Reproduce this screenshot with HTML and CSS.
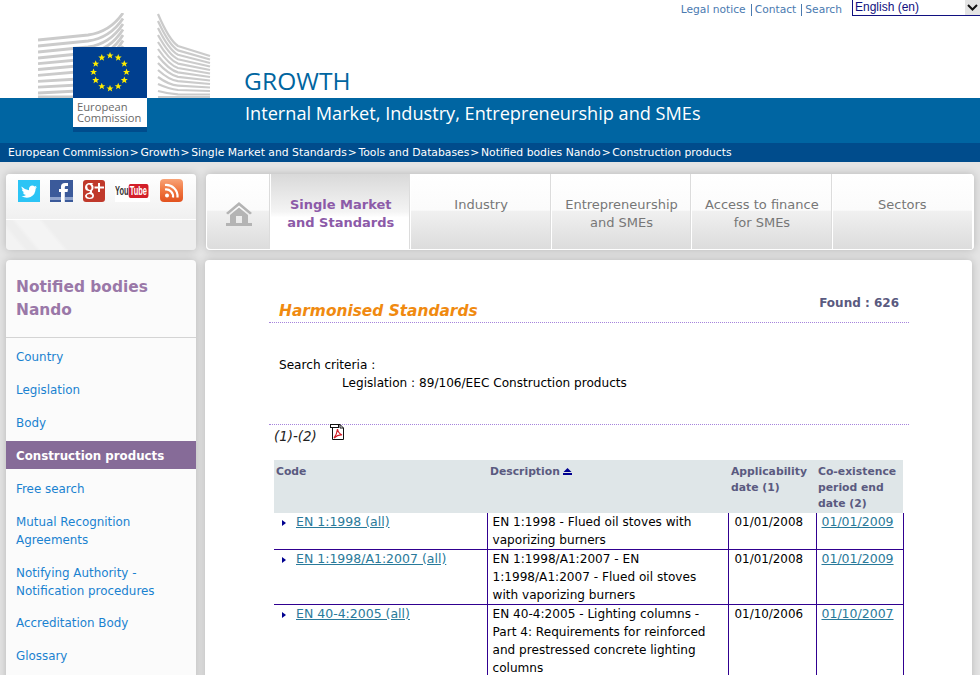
FILE: index.html
```html
<!DOCTYPE html>
<html lang="en">
<head>
<meta charset="utf-8">
<title>Harmonised Standards</title>
<link rel="stylesheet" href="styles.css">
</head>
<body>
<svg class="defs" width="0" height="0"><defs><polygon id="star" points="0,-3.6 1,-1.1 3.5,-1.1 1.5,.5 2.2,3 0,1.5 -2.2,3 -1.5,.5 -3.5,-1.1 -1,-1.1" fill="#ffed00"/></defs></svg>
<header class="top">
  <div class="logo">
    <svg class="building" width="180" height="85" viewBox="0 0 180 85" fill="none">
      <g stroke="#cbcbcb" stroke-width="2.8">
        <path d="M0 27 L50 22 Q72 19 85 0"/><path d="M0 33 L50 28 Q72 25 85 5.5"/><path d="M0 39 L50 34 Q72 31 85 11"/><path d="M0 45 L50 40 Q72 37 85 16.5"/><path d="M0 50.6 L50 46 Q72 43 85 22"/><path d="M0 56.5 L50 52 Q72 49 85 27.5"/><path d="M0 62.4 L50 58 Q72 55 85 33"/><path d="M0 68.3 L40 66"/><path d="M0 74.2 L40 72"/><path d="M0 80 L40 78"/><path d="M0 84 L40 84"/>
      </g>
      <g stroke="#cbcbcb" stroke-width="2.2">
        <path d="M120 1 Q131 27 140 33 L172 43"/><path d="M120 8 Q131 32 140 37.4 L172 46.5"/><path d="M120 15 Q131 37 140 41.8 L172 50"/><path d="M120 22 Q131 42 140 46.2 L172 53.5"/><path d="M120 29 Q131 47 140 50.6 L172 57"/><path d="M120 36 Q131 52 140 55 L172 60.5"/><path d="M120 43 Q131 57 140 59.4 L172 64"/><path d="M120 50 Q131 62 140 63.8 L172 67.5"/><path d="M120 57 Q131 67 140 68.2 L172 71"/><path d="M120 64 Q131 72 140 72.6 L172 74.5"/><path d="M120 71 Q131 76 140 77 L172 78"/><path d="M120 78 Q131 81 140 81.4 L172 81.5"/><path d="M120 84 L172 84"/>
      </g>
    </svg>
    <svg class="flag" width="74" height="51" viewBox="0 0 74 51">
      <rect width="74" height="51" fill="#003f8f"/>
      <g transform="translate(37 25)">
        <use href="#star" x="0" y="-16.5"/><use href="#star" x="8.2" y="-14.3"/><use href="#star" x="14.3" y="-8.2"/><use href="#star" x="16.5" y="0"/><use href="#star" x="14.3" y="8.2"/><use href="#star" x="8.2" y="14.3"/><use href="#star" x="0" y="16.5"/><use href="#star" x="-8.2" y="14.3"/><use href="#star" x="-14.3" y="8.2"/><use href="#star" x="-16.5" y="0"/><use href="#star" x="-14.3" y="-8.2"/><use href="#star" x="-8.2" y="-14.3"/>
      </g>
    </svg>
    <div class="logo-text">European<br>Commission</div>
  </div>
  <div class="tools">
    <a href="#">Legal notice</a><span class="pipe"></span><a href="#">Contact</a><span class="pipe"></span><a href="#">Search</a>
    <div class="lang"><span>English (en)</span><i class="lang-btn"><svg width="11" height="7" viewBox="0 0 11 7"><path d="M1 1 L5.5 5.5 L10 1" fill="none" stroke="#111" stroke-width="2"/></svg></i></div>
  </div>
  <div class="title">GROWTH</div>
  <div class="band">Internal Market, Industry, Entrepreneurship and SMEs</div>
  <nav class="crumbs">
    <a href="#">European Commission</a><b>&gt;</b><a href="#">Growth</a><b>&gt;</b><a href="#">Single Market and Standards</a><b>&gt;</b><a href="#">Tools and Databases</a><b>&gt;</b><a href="#">Notified bodies Nando</a><b>&gt;</b><a href="#">Construction products</a>
  </nav>
</header>

<div class="row">
  <div class="social">
    <div class="social-icons">
      <svg width="22" height="22" viewBox="0 0 22 22"><rect width="22" height="22" fill="#2cc4f5"/><path d="M3.5 6.5 Q7 10 11 10.2 Q10.6 6 14 5.5 Q15.6 5.4 16.5 6.5 L18.6 5.8 L17.4 7.6 L19 7.2 L17.6 8.8 Q17.6 14.5 12.5 17 Q8 18.6 3.5 16.3 Q6.3 16.3 8 15 Q5.5 14.8 4.8 12.6 L6.4 12.5 Q3.9 11.7 3.8 9.3 L5.4 9.7 Q3 8.5 3.5 6.5Z" fill="#fff"/></svg>
      <svg width="23" height="22" viewBox="0 0 23 22"><rect width="23" height="22" fill="#3b5a9a"/><path d="M11 22 V12 H9 V9 H11 V6.5 Q11 3 15 3 H18 V6 H16 Q14.8 6 14.8 7.2 V9 H18 L17.5 12 H14.8 V22Z" fill="#fff"/><rect x="0" y="17" width="11" height="3" fill="#8fa3cc"/><rect x="15" y="17" width="8" height="3" fill="#8fa3cc"/></svg>
      <svg width="22" height="22" viewBox="0 0 22 22"><rect width="22" height="22" rx="3" fill="#c0392b"/><path d="M10.5 3 H5.5 Q2 4 2 7.5 Q2 10.5 5.5 11 H7 L6.5 12.5 Q3 12.8 2 15.5 Q2 19 6.5 19 Q11 19 11 15.5 Q11 13.5 9 12.5 L9 11 Q11 9.5 10.5 6.5 Q10 4.5 9 4Z M6 4.5 Q8.5 5 8.5 8 Q8.5 10 6.8 10 Q4.3 9.5 4.2 6.5 Q4.3 4.7 6 4.5Z M6.5 14 Q9.5 14.5 9.3 16 Q9 17.7 6.5 17.7 Q3.8 17.5 3.8 15.8 Q4 14 6.5 14Z" fill="#fff"/><path d="M15 3 H17 V6.5 H21 V8.5 H17 V12 H15 V8.5 H11.5 V6.5 H15Z" fill="#fff"/></svg>
      <div class="yt"><span class="yt-in"><span class="yt-you">You</span><span class="yt-tube">Tube</span></span></div>
      <svg class="rss" width="23" height="23" viewBox="0 0 23 23"><defs><linearGradient id="rss" x1="0" y1="0" x2="0" y2="1"><stop offset="0" stop-color="#f8a377"/><stop offset=".5" stop-color="#f0763f"/><stop offset="1" stop-color="#e2521f"/></linearGradient></defs><rect width="23" height="23" rx="4" fill="url(#rss)"/><circle cx="7" cy="16.5" r="2" fill="#fff"/><path d="M5 10.5 A7 7 0 0 1 13 18.5 M5 6 A11.5 11.5 0 0 1 17.5 18.5" fill="none" stroke="#fff" stroke-width="2.2"/></svg>
    </div>
  </div>
  <nav class="tabs">
    <a class="tab-home" href="#"><svg width="28" height="25" viewBox="0 0 28 25"><path d="M1 12 L14 1 L27 12 L25 13.5 L14 4.5 L3 13.5Z M5 14 L14 6.5 L23 14 V22 H17 V15 H11 V22 H5Z M1 22 H27 V25 H1Z" fill="#b4b4b4"/></svg></a>
    <a class="tab tab-active" href="#">Single Market<br>and Standards</a>
    <a class="tab" href="#">Industry</a>
    <a class="tab" href="#">Entrepreneurship<br>and SMEs</a>
    <a class="tab" href="#">Access to finance<br>for SMEs</a>
    <a class="tab tab-last" href="#">Sectors</a>
  </nav>
</div>

<div class="row row-main">
  <aside class="side">
    <h2 class="side-title">Notified bodies Nando</h2>
    <ul class="side-menu">
      <li><a href="#">Country</a></li>
      <li><a href="#">Legislation</a></li>
      <li><a href="#">Body</a></li>
      <li class="on"><a href="#">Construction products</a></li>
      <li><a href="#">Free search</a></li>
      <li class="wide-gap"><a href="#">Mutual Recognition Agreements</a></li>
      <li class="tight-gap"><a href="#">Notifying Authority - Notification procedures</a></li>
      <li><a href="#">Accreditation Body</a></li>
      <li><a href="#">Glossary</a></li>
    </ul>
  </aside>
  <main class="content">
    <div class="head-row">
      <h1 class="page-title">Harmonised Standards</h1>
      <div class="found">Found : 626</div>
    </div>
    <div class="criteria">
      <p>Search criteria :</p>
      <p class="crit-val">Legislation : 89/106/EEC Construction products</p>
    </div>
    <div class="pager">
      <em>(1)-(2)</em>
      <svg class="pdf" width="15" height="18" viewBox="0 0 15 18"><path d="M2.5 1.5 H10 L13.5 5 V16.5 H2.5Z" fill="#fff" stroke="#111"/><path d="M10 1.5 V5 H13.5" fill="none" stroke="#111"/><rect x="0.5" y="1.5" width="8" height="3" fill="#fff" stroke="#111"/><path d="M4 15 Q7 11 7.5 6 Q8 10 12 12 Q8 11.5 4 15Z" fill="none" stroke="#d3202a" stroke-width="1.2"/></svg>
    </div>
    <table class="grid">
      <colgroup><col class="c1"><col class="c2"><col class="c3"><col class="c4"></colgroup>
      <thead>
        <tr><th class="th-code">Code</th><th>Description <svg class="sort" width="9" height="7" viewBox="0 0 9 7"><path d="M4.5 0 L8.5 4 H.5Z M0 5 H9 V7 H0Z" fill="#000090"/></svg></th><th>Applicability date (1)</th><th class="th-end">Co-existence period end date (2)</th></tr>
      </thead>
      <tbody>
        <tr><td class="code"><a href="#">EN 1:1998 (all)</a></td><td>EN 1:1998 - Flued oil stoves with vaporizing burners</td><td class="date">01/01/2008</td><td class="end"><a href="#">01/01/2009</a></td></tr>
        <tr><td class="code"><a href="#">EN 1:1998/A1:2007 (all)</a></td><td>EN 1:1998/A1:2007 - EN 1:1998/A1:2007 - Flued oil stoves with vaporizing burners</td><td class="date">01/01/2008</td><td class="end"><a href="#">01/01/2009</a></td></tr>
        <tr><td class="code"><a href="#">EN 40-4:2005 (all)</a></td><td>EN 40-4:2005 - Lighting columns - Part 4: Requirements for reinforced and prestressed concrete lighting columns</td><td class="date">01/10/2006</td><td class="end"><a href="#">01/10/2007</a></td></tr>
      </tbody>
    </table>
  </main>
</div>
</body>
</html>
```
FILE: styles.css
```css
html { overflow: hidden; height: 675px; }
body {
  margin: 0;
  height: 675px;
  overflow: hidden;
  background: #e4e4e4;
  font-family: "DejaVu Sans", Verdana, sans-serif;
  font-size: 12px;
  color: #000;
}
a { text-decoration: none; color: inherit; }
.defs { position: absolute; }

/* Header */
.top { position: relative; height: 162px; background: #fff; padding-top: 66px; box-sizing: border-box; }
.title {
  height: 32px;
  padding-left: 244px;
  font-family: "Open Sans", sans-serif;
  font-size: 24.5px;
  line-height: 30px;
  letter-spacing: .1px;
  color: #00659f;
}
.band {
  height: 45px;
  padding-left: 245px;
  background: #0065a2;
  color: #fff;
  font-family: "Open Sans", sans-serif;
  font-size: 18.15px;
  line-height: 31px;
}
.crumbs {
  height: 19px;
  padding-left: 8px;
  background: #004c8c;
  color: #fff;
  font-size: 10.8px;
  line-height: 19px;
  white-space: nowrap;
}
.crumbs b { font-weight: normal; padding: 0 1.6px 0 1px; }

.logo { position: absolute; left: 38px; top: 13px; width: 180px; height: 120px; z-index: 2; }
.building { position: absolute; left: 0; top: 0; }
.flag { position: absolute; left: 35px; top: 34px; }
.logo-text {
  position: absolute;
  left: 35px;
  top: 85px;
  width: 74px;
  height: 34px;
  box-sizing: border-box;
  padding: 3px 0 0 4px;
  background: #fff;
  border-bottom: 5px solid #004c8c;
  color: #6a6a6a;
  font-family: "Open Sans", sans-serif;
  font-size: 11.2px;
  line-height: 11px;
  white-space: nowrap;
}
.tools {
  position: absolute;
  right: 0;
  top: 0;
  display: flex;
  align-items: flex-start;
  color: #4a7ab0;
  font-size: 10.7px;
  line-height: 19px;
}
.pipe { width: 1px; height: 12px; margin: 4px 3px 0 5px; background: #4a7ab0; }
.lang {
  display: flex;
  width: 128px;
  height: 16px;
  margin-left: 10px;
  box-sizing: border-box;
  border: 1px solid #101080;
  border-top: 0;
  border-right: 0;
  color: #101080;
  font-family: "Liberation Sans", sans-serif;
  font-size: 12px;
  line-height: 14px;
  justify-content: space-between;
}
.lang span { padding-left: 2px; }
.lang-btn {
  display: flex;
  width: 15px;
  align-items: center;
  justify-content: center;
  background: #e4e4e4;
}

/* Rows */
.row { display: flex; gap: 10px; padding: 12px 6px 0; }
.row-main { gap: 9px; padding-top: 10px; }

.social {
  width: 190px;
  height: 76px;
  border-radius: 4px;
  box-shadow: 0 0 8px rgba(0,0,0,.2);
  background: linear-gradient(50deg, #f3f3f3 0, #f3f3f3 13px, #eeeeee 17px, #eeeeee 23px, #f4f4f4 27px, #f4f4f4 44px, #eeeeee 48px);
}
.social-icons {
  display: flex;
  align-items: flex-start;
  height: 46px;
  box-sizing: border-box;
  padding: 6px 0 0 12px;
  gap: 10px;
  border-bottom: 1px solid #fff;
  background: linear-gradient(#ffffff, #f0f0f0);
  border-radius: 4px 4px 0 0;
}
.rss { margin-top: -1px; }
.yt {
  width: 35px;
  height: 22px;
  overflow: hidden;
  background: #fff;
  font-family: "Liberation Sans", sans-serif;
  font-size: 12px;
  font-weight: bold;
  white-space: nowrap;
}
.yt-in {
  display: inline-flex;
  align-items: center;
  height: 22px;
  transform: scaleX(.62);
  transform-origin: 0 50%;
}
.yt-you { color: #333; }
.yt-tube { padding: 1px 2px; border-radius: 3px; background: #d3202a; color: #fff; line-height: 12px; }

.tabs {
  display: flex;
  width: 768px;
  height: 76px;
  box-sizing: border-box;
  padding-right: 1px;
  border: 1px solid #fff;
  border-top: 0;
  border-radius: 4px;
  box-shadow: 0 0 8px rgba(0,0,0,.2);
  background: #fff;
}
.tab, .tab-home {
  display: flex;
  align-items: flex-start;
  justify-content: center;
  height: 75px;
  box-sizing: border-box;
  padding-top: 22px;
  border-right: 1px solid #fff;
  background: linear-gradient(#ffffff 0, #fbfbfb 48%, #f0f0f0 50%, #dcdcdc 100%);
  box-shadow: inset -1px 0 0 #dcdcdc;
  color: #777;
  font-size: 13px;
  line-height: 18px;
  text-align: center;
}
.tab { flex: 1 1 0; }
.tab-home {
  flex: none;
  width: 64px;
  padding-top: 27px;
  border-radius: 4px 0 0 4px;
}
.tab-active {
  background: linear-gradient(#d9d9d9 0, #f4f4f4 50%, #ffffff 58%);
  color: #8c5aa8;
  font-weight: bold;
}
.tab-last { border-right: 0; box-shadow: none; }

/* Sidebar */
.side {
  width: 190px;
  height: 430px;
  flex: none;
  border-radius: 4px;
  background: #fbfbfb;
  box-shadow: 0 0 8px rgba(0,0,0,.2);
}
.side-title {
  margin: 0;
  height: 78px;
  box-sizing: border-box;
  padding: 16px 10px 0;
  border-bottom: 1px solid #d4d4d4;
  color: #9a78a8;
  font-size: 15.4px;
  font-weight: bold;
  line-height: 23px;
}
.side-menu { margin: 0; padding: 0; list-style: none; }
.side-menu li {
  padding: 10.4px 10px 4.4px;
  color: #1a82d0;
  line-height: 18px;
  font-size: 11.9px;
}
.side-menu li.wide-gap { padding-bottom: 4.8px; }
.side-menu li.tight-gap { padding-bottom: 4px; }
.side-menu li.on {
  background: #866b98;
  color: #fff;
  font-weight: bold;
  font-size: 11.8px;
  padding: 6px 10px 4px;
  margin: 4.6px 0 .6px;
}

/* Content */
.content {
  width: 767px;
  height: 430px;
  flex: none;
  box-sizing: border-box;
  padding: 0 68px 0 69px;
  border-radius: 4px;
  background: #fff;
  box-shadow: 0 0 8px rgba(0,0,0,.2);
}
.head-row {
  display: flex;
  justify-content: space-between;
  align-items: flex-start;
  height: 63px;
  box-sizing: border-box;
  padding: 34px 10px 0 10px;
  margin: 0 -5px;
  border-bottom: 1px dotted #a684dc;
}
.page-title {
  margin: 5px 0 0;
  color: #f08a10;
  font-family: "DejaVu Sans", sans-serif;
  font-size: 15.4px;
  font-style: italic;
  font-weight: bold;
  line-height: 24px;
}
.found { margin-top: 1px; color: #5a5a80; font-size: 12px; font-weight: bold; line-height: 16px; }
.criteria {
  height: 102px;
  box-sizing: border-box;
  padding: 33px 0 0 10px;
  margin: 0 -5px;
  border-bottom: 1px dotted #a684dc;
  line-height: 18px;
  font-size: 12.1px;
}
.criteria p { margin: 0; }
.crit-val { padding-left: 63px; }
.pager {
  display: flex;
  height: 35px;
  box-sizing: border-box;
  align-items: flex-start;
  padding-top: 2px;
  color: #222;
  font-size: 13.4px;
  line-height: 20px;
  gap: 13px;
}
.pdf { margin-top: -4px; }

.grid { width: 629px; border-collapse: collapse; table-layout: fixed; line-height: 18px; font-size: 12.1px; }
.c1 { width: 213px; }
.c2 { width: 241px; }
.c3 { width: 88px; }
.c4 { width: 87px; }
.grid th {
  height: 53px;
  box-sizing: border-box;
  padding: 4px 2px 0 3px;
  vertical-align: top;
  background: #dfe6e8;
  color: #5a5a80;
  font-size: 10.8px;
  line-height: 16px;
  text-align: left;
}
.grid th.th-code { padding-left: 2px; }
.grid th.th-end { padding-left: 2px; }
.sort { margin-left: -1px; }
.grid td {
  padding: 0 5px;
  vertical-align: top;
  border: 1px solid #300090;
}
.grid td a { color: #2a7a9a; text-decoration: underline; font-size: 12.5px; }
.grid tbody tr > td:first-child { border-left: 0; position: relative; padding-left: 22px; }
.grid tbody tr:first-child td { border-top: 0; }
.grid td.date { padding-left: 6px; font-size: 11.9px; }
.grid td.end { padding-left: 5px; }
.code::before {
  content: "";
  position: absolute;
  left: 8px;
  top: 7px;
  border-left: 4px solid #000090;
  border-top: 3px solid transparent;
  border-bottom: 3px solid transparent;
}
```
